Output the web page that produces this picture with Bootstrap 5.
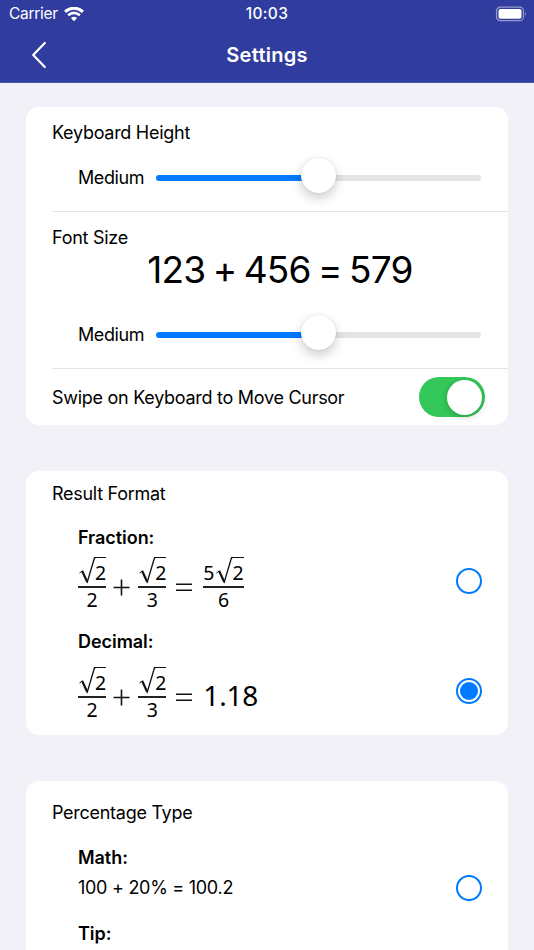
<!DOCTYPE html>
<html lang="en">
<head>
<meta charset="utf-8">
<meta name="viewport" content="width=device-width, initial-scale=1">
<title>Settings</title>
<link href="https://cdn.jsdelivr.net/npm/bootstrap@5.3.0/dist/css/bootstrap.min.css" rel="stylesheet">
<style>
body { font-family: Inter, sans-serif; background: #f2f1f7; color: #000; height: 950px; overflow: hidden; font-size: 18px; line-height: 24px; letter-spacing: -.28px; }
.app-header { background: #303d9e; height: 83px; border-bottom: 1px solid #4a55a9; }
.status-bar { height: 28px; font-size: 15.5px; line-height: 28px; padding: 0 7px 0 9px; }
.status-bar > div { flex: 1 1 0; }
.wifi { margin-left: -2px; }
.status-bar > .status-time { letter-spacing: .35px; font-weight: 500; margin-left: -2px; }
.title-bar { height: 54px; padding: 0 30px; }
.title-bar > div { flex: 1 1 0; }
.title-bar h1 { font-size: 20px; letter-spacing: .25px; line-height: 54px; }
.settings-list { padding: 24px 26px 0; gap: 46px; }
.settings-card { border: 0; border-radius: 13px; padding-left: 26px; --bs-card-color: #000; background: #fff; }
.setting-row { border-bottom: 1px solid #e4e4e6; padding-right: 27px; }
.row-keyboard { height: 105px; padding-top: 14px; }
.row-font { height: 157px; padding-top: 14px; }
.row-swipe { height: 56px; border: 0; padding-right: 23px; }
.row-swipe > span { padding-top: 1px; }
.slider-line { padding-left: 26px; height: 36px; gap: 12px; }
.row-keyboard .slider-line { margin-top: 15px; }
.row-font .slider-line { margin-top: 27px; }
.slider-name { width: 66px; white-space: nowrap; letter-spacing: -.4px; }
.sample { font-size: 37px; line-height: 40px; margin: 0 -27px 0 0; letter-spacing: -.75px; word-spacing: -2.4px; }
.form-range { height: 36px; flex: 1; }
.form-range::-webkit-slider-runnable-track { height: 5.5px; border-radius: 3px; background: linear-gradient(90deg, #007aff 50%, #e4e4e6 50%); }
.form-range::-webkit-slider-thumb { width: 35px; height: 35px; margin-top: -17px; background: #fff; border-radius: 50%; box-shadow: 0 5px 12px rgba(0,0,0,.2), 0 0 2px rgba(0,0,0,.12); }
.toggle.form-check-input { width: 66px; height: 40px; margin: 0; border: 0; border-radius: 20px; background: #34c759; padding: 2.5px 2px 0 28px; }
.toggle.form-check-input:checked { background: #34c759; }
.toggle::before { content: ""; display: block; width: 35px; height: 35px; border-radius: 50%; background: #fff; box-shadow: 0 2px 6px rgba(0,0,0,.22); }
.choice { padding: 0 26px 0 26px; }
.choice-name { font-weight: 600; letter-spacing: -.05px; }
.choice .form-check-input { width: 26px; height: 26px; margin: 0; padding: 2px; border: 2px solid #007aff; background: #fff; flex: none; }
.choice .form-check-input:checked::before { content: ""; display: block; width: 18px; height: 18px; border-radius: 50%; background: #007aff; }
.card-result { height: 264px; padding-top: 11px; }
.card-result .choice { margin-top: 20px; }
.card-result .choice + .choice { margin-top: 23px; }
.fraction-line { margin-top: 5px; }
.decimal-line { margin-top: 11px; }
.card-percent { height: 169px; padding-top: 20px; border-radius: 13px 13px 0 0; }
.card-percent .choice { margin-top: 21px; }
.percent-line { margin-top: 5px; }
.formula { font-family: "Noto Sans", sans-serif; height: 52px; font-size: 19.5px; letter-spacing: 0; padding-top: 2px; }
.frac-num { height: 29px; }
.frac-den { border-top: 2px solid #222; height: 22px; line-height: 23px; text-align: center; }
.radicand { border-top: 1.5px solid #111; height: 26px; line-height: 29px; margin-left: -1px; }
.lead-digit { line-height: 31px; margin-right: 1px; }
.op-plus { margin: 11px 8px 0 7px; flex: none; }
.op-equals { margin: 11px 10px 0 9px; flex: none; }
.decimal-value { font-size: 28px; line-height: 52px; margin: 5px 0 0 0; letter-spacing: -.2px; }
</style>
</head>
<body>
<header class="app-header text-white">
  <div class="status-bar d-flex">
    <div class="d-flex align-items-center gap-2"><span>Carrier</span>
      <svg class="wifi" width="20" height="15" viewBox="0 0 20 15" fill="none" stroke="#fff"><path d="M1 4.7Q10-2.4 19 4.7" stroke-width="3"/><path d="M4.1 8.3Q10 3.4 15.9 8.3" stroke-width="2.7"/><path d="M6.9 11.1Q10 8.6 13.1 11.1L10 14.3Z" fill="#fff" stroke="none"/></svg>
    </div>
    <div class="status-time text-center">10:03</div>
    <div class="d-flex align-items-center justify-content-end">
      <svg width="32" height="16" viewBox="0 0 32 16"><rect x="1.5" y="1.1" width="27" height="13.6" rx="4" fill="none" stroke="#959bcc" stroke-width="1.2"/><rect x="3.5" y="3" width="23" height="9.8" rx="2" fill="#fff"/><path d="M30.2 5.8Q32 8 30.2 10.2Z" fill="#959bcc"/></svg>
    </div>
  </div>
  <nav class="title-bar d-flex align-items-center">
    <div><svg class="d-block" width="18" height="28" viewBox="0 0 18 28" fill="none" stroke="#fff" stroke-width="2.2" stroke-linecap="round" stroke-linejoin="round"><path d="M14.8 2 3.2 14 14.8 26"/></svg></div>
    <h1 class="m-0 fw-semibold">Settings</h1>
    <div></div>
  </nav>
</header>

<main class="settings-list d-flex flex-column">
  <section class="card settings-card">
    <div class="setting-row row-keyboard">
      <div>Keyboard Height</div>
      <div class="slider-line d-flex align-items-center"><span class="slider-name">Medium</span><input class="form-range" type="range" min="0" max="4" value="2" aria-label="Keyboard Height"></div>
    </div>
    <div class="setting-row row-font">
      <div>Font Size</div>
      <div class="sample text-center">123 + 456 = 579</div>
      <div class="slider-line d-flex align-items-center"><span class="slider-name">Medium</span><input class="form-range" type="range" min="0" max="4" value="2" aria-label="Font Size"></div>
    </div>
    <div class="setting-row row-swipe d-flex align-items-center justify-content-between">
      <span>Swipe on Keyboard to Move Cursor</span>
      <input class="form-check-input toggle" type="checkbox" role="switch" checked aria-label="Swipe">
    </div>
  </section>

  <section class="card settings-card card-result">
    <div>Result Format</div>
    <div class="choice">
      <div class="choice-name">Fraction:</div>
      <div class="fraction-line d-flex align-items-center justify-content-between">
        <div class="formula d-flex align-items-center">
          <div><div class="frac-num d-flex"><svg width="18" height="27" viewBox="0 0 18 27" fill="none" stroke="#111"><path d="M1.5 16 4.5 13.8" stroke-width="1"/><path d="M4.2 14 9 24.5" stroke-width="2.2"/><path d="M9 26 16.5.7H18" stroke-width="1.3"/></svg><span class="radicand">2</span></div><div class="frac-den">2</div></div>
          <svg class="op-plus" width="17" height="17" viewBox="0 0 17 17" stroke="#111" stroke-width="1.6"><path d="M.5 8.5h16M8.5.5v16"/></svg>
          <div><div class="frac-num d-flex"><svg width="18" height="27" viewBox="0 0 18 27" fill="none" stroke="#111"><path d="M1.5 16 4.5 13.8" stroke-width="1"/><path d="M4.2 14 9 24.5" stroke-width="2.2"/><path d="M9 26 16.5.7H18" stroke-width="1.3"/></svg><span class="radicand">2</span></div><div class="frac-den">3</div></div>
          <svg class="op-equals" width="18" height="17" viewBox="0 0 18 17" stroke="#111" stroke-width="1.5"><path d="M1 5.3h16M1 11.3h16"/></svg>
          <div><div class="frac-num d-flex"><span class="lead-digit">5</span><svg width="18" height="27" viewBox="0 0 18 27" fill="none" stroke="#111"><path d="M1.5 16 4.5 13.8" stroke-width="1"/><path d="M4.2 14 9 24.5" stroke-width="2.2"/><path d="M9 26 16.5.7H18" stroke-width="1.3"/></svg><span class="radicand">2</span></div><div class="frac-den">6</div></div>
        </div>
        <input class="form-check-input" type="radio" name="result" aria-label="Fraction">
      </div>
    </div>
    <div class="choice">
      <div class="choice-name">Decimal:</div>
      <div class="decimal-line d-flex align-items-center justify-content-between">
        <div class="formula d-flex align-items-center">
          <div><div class="frac-num d-flex"><svg width="18" height="27" viewBox="0 0 18 27" fill="none" stroke="#111"><path d="M1.5 16 4.5 13.8" stroke-width="1"/><path d="M4.2 14 9 24.5" stroke-width="2.2"/><path d="M9 26 16.5.7H18" stroke-width="1.3"/></svg><span class="radicand">2</span></div><div class="frac-den">2</div></div>
          <svg class="op-plus" width="17" height="17" viewBox="0 0 17 17" stroke="#111" stroke-width="1.6"><path d="M.5 8.5h16M8.5.5v16"/></svg>
          <div><div class="frac-num d-flex"><svg width="18" height="27" viewBox="0 0 18 27" fill="none" stroke="#111"><path d="M1.5 16 4.5 13.8" stroke-width="1"/><path d="M4.2 14 9 24.5" stroke-width="2.2"/><path d="M9 26 16.5.7H18" stroke-width="1.3"/></svg><span class="radicand">2</span></div><div class="frac-den">3</div></div>
          <svg class="op-equals" width="18" height="17" viewBox="0 0 18 17" stroke="#111" stroke-width="1.5"><path d="M1 5.3h16M1 11.3h16"/></svg>
          <span class="decimal-value">1.18</span>
        </div>
        <input class="form-check-input" type="radio" name="result" checked aria-label="Decimal">
      </div>
    </div>
  </section>

  <section class="card settings-card card-percent">
    <div>Percentage Type</div>
    <div class="choice">
      <div class="choice-name">Math:</div>
      <div class="percent-line d-flex align-items-center justify-content-between">
        <span>100 + 20% = 100.2</span>
        <input class="form-check-input" type="radio" name="percent" aria-label="Math">
      </div>
    </div>
    <div class="choice">
      <div class="choice-name">Tip:</div>
    </div>
  </section>
</main>
<script src="https://cdn.jsdelivr.net/npm/bootstrap@5.3.0/dist/js/bootstrap.bundle.min.js"></script>
</body>
</html>
